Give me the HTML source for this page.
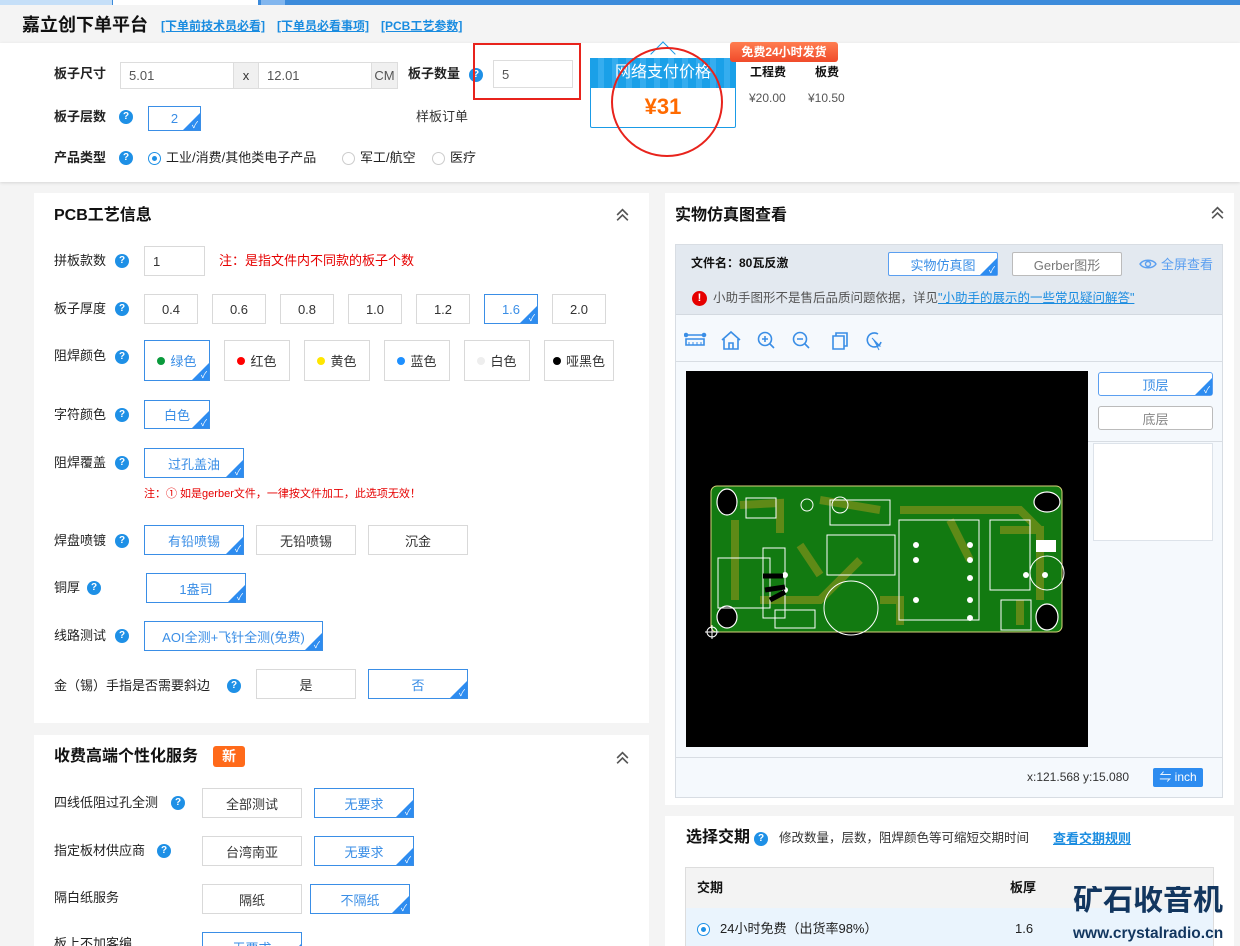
<!DOCTYPE html>
<html><head><meta charset="utf-8">
<style>
*{margin:0;padding:0;box-sizing:border-box}
html{width:1240px;height:946px;overflow:hidden}
body{width:1240px;height:946px;overflow:hidden;background:#f4f4f4;font-family:"Liberation Sans","Noto Sans CJK SC",sans-serif;font-size:13px;color:#333;position:relative}
.a{position:absolute}
.t{position:absolute;white-space:nowrap;line-height:1}
.b{position:absolute;border:1px solid #d9d9d9;background:#fff;display:flex;align-items:center;justify-content:center;font-size:13px;color:#333}
.sel{border-color:#3a8ee6;color:#3a8ee6}
.sel::after{content:"";position:absolute;right:0;bottom:0;border-style:solid;border-width:0 0 17px 17px;border-color:transparent transparent #2d8cf0 transparent}
.sel::before{content:"✓";position:absolute;right:2px;bottom:0;color:#fff;font-size:9px;z-index:2;line-height:10px}
.q{position:absolute;width:14px;height:14px;border-radius:50%;background:#1e90e6;color:#fff;font-size:10px;font-weight:bold;text-align:center;line-height:14px}
.lbl{position:absolute;white-space:nowrap;font-size:13px;color:#222;line-height:1}
.panel{position:absolute;background:#fff;overflow:hidden}
.h{position:absolute;font-size:16px;font-weight:bold;color:#111;white-space:nowrap;line-height:1}
.chev{position:absolute;width:14px;height:14px}
.dot{display:inline-block;width:8px;height:8px;border-radius:50%;margin-right:5px}
</style></head><body>
<div class="a" style="left:0;top:0;width:112px;height:5px;background:#c5dff8"></div>
<div class="a" style="left:112px;top:0;width:1px;height:5px;background:#3c8bdb"></div>
<div class="a" style="left:113px;top:0;width:145px;height:5px;background:#fff"></div>
<div class="a" style="left:258px;top:0;width:3px;height:5px;background:#3c8bdb"></div>
<div class="a" style="left:261px;top:0;width:24px;height:5px;background:#82b6ee"></div>
<div class="a" style="left:285px;top:0;width:955px;height:5px;background:#3c8bdb"></div>

<div class="t" style="left:22px;top:16px;font-size:18px;font-weight:bold;color:#111">嘉立创下单平台</div>
<div class="t" style="left:161px;top:20px;font-size:12px;font-weight:bold;color:#1a8ce0;text-decoration:underline">[下单前技术员必看]</div>
<div class="t" style="left:277px;top:20px;font-size:12px;font-weight:bold;color:#1a8ce0;text-decoration:underline">[下单员必看事项]</div>
<div class="t" style="left:381px;top:20px;font-size:12px;font-weight:bold;color:#1a8ce0;text-decoration:underline">[PCB工艺参数]</div>

<div class="a" style="left:0;top:43px;width:1240px;height:139px;background:#fff;box-shadow:0 1px 3px rgba(0,0,0,.12)"></div>
<div class="lbl" style="left:54px;top:67px;font-weight:bold">板子尺寸</div>
<div class="b" style="left:120px;top:62px;width:114px;height:27px;justify-content:flex-start;padding-left:8px;color:#555;border-color:#ddd">5.01</div>
<div class="b" style="left:233px;top:62px;width:26px;height:27px;background:#f0f0f0;border-color:#ddd">x</div>
<div class="b" style="left:258px;top:62px;width:114px;height:27px;justify-content:flex-start;padding-left:8px;color:#555;border-color:#ddd">12.01</div>
<div class="b" style="left:371px;top:62px;width:27px;height:27px;background:#f0f0f0;border-color:#ddd;color:#555">CM</div>
<div class="lbl" style="left:408px;top:67px;font-weight:bold">板子数量</div>
<div class="q" style="left:469px;top:68px">?</div>
<div class="b" style="left:493px;top:60px;width:80px;height:28px;justify-content:flex-start;padding-left:8px;color:#555;border-color:#ddd">5</div>
<div class="a" style="left:473px;top:43px;width:108px;height:57px;border:2px solid #e8231c"></div>

<div class="lbl" style="left:54px;top:110px;font-weight:bold">板子层数</div>
<div class="q" style="left:119px;top:110px">?</div>
<div class="b sel" style="left:148px;top:106px;width:53px;height:25px">2</div>
<div class="lbl" style="left:416px;top:110px;color:#333">样板订单</div>

<div class="lbl" style="left:54px;top:151px;font-weight:bold">产品类型</div>
<div class="q" style="left:119px;top:151px">?</div>
<div class="a" style="left:148px;top:152px;width:13px;height:13px;border:1px solid #1e90e6;border-radius:50%"><div class="a" style="left:3px;top:3px;width:5px;height:5px;border-radius:50%;background:#1e90e6"></div></div>
<div class="lbl" style="left:166px;top:151px">工业/消费/其他类电子产品</div>
<div class="a" style="left:342px;top:152px;width:13px;height:13px;border:1px solid #ccc;border-radius:50%"></div>
<div class="lbl" style="left:360px;top:151px">军工/航空</div>
<div class="a" style="left:432px;top:152px;width:13px;height:13px;border:1px solid #ccc;border-radius:50%"></div>
<div class="lbl" style="left:450px;top:151px">医疗</div>

<div class="a" style="left:590px;top:58px;width:146px;height:70px;border:1px solid #1a9be6;border-radius:2px;background:#fff"></div>
<div class="a" style="left:590px;top:58px;width:146px;height:30px;background:repeating-linear-gradient(90deg,#1aa0e8 0 8px,#35adef 8px 14px)"></div>
<div class="a" style="left:654px;top:45px;width:18px;height:18px;border-left:1px solid #1a9be6;border-top:1px solid #1a9be6;transform:rotate(45deg)"></div>
<div class="t" style="left:590px;top:65px;width:146px;text-align:center;color:#fff;font-size:16px">网络支付价格</div>
<div class="t" style="left:590px;top:96px;width:146px;text-align:center;color:#ff6a00;font-size:22px;font-weight:bold">¥31</div>
<div class="a" style="left:730px;top:42px;width:108px;height:20px;background:linear-gradient(#ff7d50,#f04a2a);border-radius:3px;color:#fff;font-size:12px;font-weight:bold;text-align:center;line-height:20px">免费24小时发货</div>
<div class="a" style="left:611px;top:47px;width:112px;height:110px;border:2px solid #e8231c;border-radius:50%"></div>
<div class="lbl" style="left:750px;top:66px;font-size:12px;font-weight:bold;color:#111">工程费</div>
<div class="lbl" style="left:815px;top:66px;font-size:12px;font-weight:bold;color:#111">板费</div>
<div class="lbl" style="left:749px;top:92px;font-size:12px;color:#555">¥20.00</div>
<div class="lbl" style="left:808px;top:92px;font-size:12px;color:#555">¥10.50</div>

<div class="panel" style="left:34px;top:193px;width:615px;height:530px"></div>
<div class="h" style="left:54px;top:208px">PCB工艺信息</div>
<svg class="chev" style="left:615px;top:207px;width:15px;height:16px" viewBox="0 0 14 14"><path d="M2 7l5-5 5 5M2 12l5-5 5 5" fill="none" stroke="#555" stroke-width="1.5"/></svg>

<div class="lbl" style="left:54px;top:254px">拼板款数</div><div class="q" style="left:115px;top:254px">?</div>
<div class="b" style="left:144px;top:246px;width:61px;height:30px;justify-content:flex-start;padding-left:8px">1</div>
<div class="lbl" style="left:219px;top:254px;color:#e60000">注：是指文件内不同款的板子个数</div>

<div class="lbl" style="left:54px;top:302px">板子厚度</div><div class="q" style="left:115px;top:302px">?</div>
<div class="b" style="left:144px;top:294px;width:54px;height:30px">0.4</div>
<div class="b" style="left:212px;top:294px;width:54px;height:30px">0.6</div>
<div class="b" style="left:280px;top:294px;width:54px;height:30px">0.8</div>
<div class="b" style="left:348px;top:294px;width:54px;height:30px">1.0</div>
<div class="b" style="left:416px;top:294px;width:54px;height:30px">1.2</div>
<div class="b sel" style="left:484px;top:294px;width:54px;height:30px">1.6</div>
<div class="b" style="left:552px;top:294px;width:54px;height:30px">2.0</div>

<div class="lbl" style="left:54px;top:349px">阻焊颜色</div><div class="q" style="left:115px;top:350px">?</div>
<div class="b sel" style="left:144px;top:340px;width:66px;height:41px"><span class="dot" style="background:#0a9a3c"></span>绿色</div>
<div class="b" style="left:224px;top:340px;width:66px;height:41px"><span class="dot" style="background:#f00"></span>红色</div>
<div class="b" style="left:304px;top:340px;width:66px;height:41px"><span class="dot" style="background:#ffe600"></span>黄色</div>
<div class="b" style="left:384px;top:340px;width:66px;height:41px"><span class="dot" style="background:#1e90ff"></span>蓝色</div>
<div class="b" style="left:464px;top:340px;width:66px;height:41px"><span class="dot" style="background:#eee"></span>白色</div>
<div class="b" style="left:544px;top:340px;width:70px;height:41px"><span class="dot" style="background:#000"></span>哑黑色</div>

<div class="lbl" style="left:54px;top:408px">字符颜色</div><div class="q" style="left:115px;top:408px">?</div>
<div class="b sel" style="left:144px;top:400px;width:66px;height:29px">白色</div>

<div class="lbl" style="left:54px;top:456px">阻焊覆盖</div><div class="q" style="left:115px;top:456px">?</div>
<div class="b sel" style="left:144px;top:448px;width:100px;height:30px">过孔盖油</div>
<div class="lbl" style="left:144px;top:489px;font-size:11px;color:#e60000">注：① 如是gerber文件，一律按文件加工，此选项无效！</div>

<div class="lbl" style="left:54px;top:534px">焊盘喷镀</div><div class="q" style="left:115px;top:534px">?</div>
<div class="b sel" style="left:144px;top:525px;width:100px;height:30px">有铅喷锡</div>
<div class="b" style="left:256px;top:525px;width:100px;height:30px">无铅喷锡</div>
<div class="b" style="left:368px;top:525px;width:100px;height:30px">沉金</div>

<div class="lbl" style="left:54px;top:581px">铜厚</div><div class="q" style="left:87px;top:581px">?</div>
<div class="b sel" style="left:146px;top:573px;width:100px;height:30px">1盎司</div>

<div class="lbl" style="left:54px;top:629px">线路测试</div><div class="q" style="left:115px;top:629px">?</div>
<div class="b sel" style="left:144px;top:621px;width:179px;height:30px">AOI全测+飞针全测(免费)</div>

<div class="lbl" style="left:54px;top:679px">金（锡）手指是否需要斜边</div><div class="q" style="left:227px;top:679px">?</div>
<div class="b" style="left:256px;top:669px;width:100px;height:30px">是</div>
<div class="b sel" style="left:368px;top:669px;width:100px;height:30px">否</div>

<div class="panel" style="left:34px;top:735px;width:615px;height:211px">
<div class="h" style="left:20px;top:14px">收费高端个性化服务</div>
<div class="a" style="left:179px;top:11px;width:32px;height:21px;background:#ff6a1a;border-radius:3px;color:#fff;font-weight:bold;font-size:14px;text-align:center;line-height:21px">新</div>
<svg class="chev" style="left:581px;top:15px;width:15px;height:16px" viewBox="0 0 14 14"><path d="M2 7l5-5 5 5M2 12l5-5 5 5" fill="none" stroke="#555" stroke-width="1.5"/></svg>
<div class="lbl" style="left:20px;top:61px">四线低阻过孔全测</div><div class="q" style="left:137px;top:61px">?</div>
<div class="b" style="left:168px;top:53px;width:100px;height:30px">全部测试</div>
<div class="b sel" style="left:280px;top:53px;width:100px;height:30px">无要求</div>
<div class="lbl" style="left:20px;top:109px">指定板材供应商</div><div class="q" style="left:123px;top:109px">?</div>
<div class="b" style="left:168px;top:101px;width:100px;height:30px">台湾南亚</div>
<div class="b sel" style="left:280px;top:101px;width:100px;height:30px">无要求</div>
<div class="lbl" style="left:20px;top:156px">隔白纸服务</div>
<div class="b" style="left:168px;top:149px;width:100px;height:30px">隔纸</div>
<div class="b sel" style="left:276px;top:149px;width:100px;height:30px">不隔纸</div>
<div class="lbl" style="left:20px;top:202px">板上不加客编</div>
<div class="b sel" style="left:168px;top:197px;width:100px;height:30px">无要求</div>
</div>

<div class="panel" style="left:665px;top:193px;width:569px;height:612px"></div>
<div class="h" style="left:675px;top:208px">实物仿真图查看</div>
<svg class="chev" style="left:1210px;top:205px;width:15px;height:16px" viewBox="0 0 14 14"><path d="M2 7l5-5 5 5M2 12l5-5 5 5" fill="none" stroke="#555" stroke-width="1.5"/></svg>
<div class="a" style="left:675px;top:244px;width:548px;height:554px;border:1px solid #d8dde3;background:#f5f9fd"></div>
<div class="a" style="left:676px;top:245px;width:546px;height:70px;background:#e3e9f0;border-bottom:1px solid #d3d9e0"></div>
<div class="lbl" style="left:691px;top:257px;font-size:12px;font-weight:bold;color:#111">文件名：80瓦反激</div>
<div class="b sel" style="left:888px;top:252px;width:110px;height:24px;border-color:#5b9ff0;border-radius:2px">实物仿真图</div>
<div class="b" style="left:1012px;top:252px;width:110px;height:24px;border-color:#bbb;color:#777;border-radius:2px">Gerber图形</div>
<svg class="a" style="left:1139px;top:257px" width="18" height="14" viewBox="0 0 18 14"><path d="M1 7C4 2 14 2 17 7C14 12 4 12 1 7Z" fill="none" stroke="#5b9ff0" stroke-width="1.4"/><circle cx="9" cy="7" r="2.5" fill="none" stroke="#5b9ff0" stroke-width="1.4"/></svg>
<div class="lbl" style="left:1161px;top:258px;color:#5b9ff0">全屏查看</div>
<div class="a" style="left:692px;top:291px;width:15px;height:15px;border-radius:50%;background:#e60000;color:#fff;font-size:11px;font-weight:bold;text-align:center;line-height:15px">!</div>
<div class="lbl" style="left:713px;top:292px;font-size:12.5px;color:#555">小助手图形不是售后品质问题依据，详见<span style="color:#1a8ce0;text-decoration:underline">"小助手的展示的一些常见疑问解答"</span></div>
<svg class="a" style="left:684px;top:330px" width="220" height="22" viewBox="0 0 220 22" fill="none" stroke="#3a8ee6" stroke-width="1.6">
<path d="M1 5h20M2 9h18v6H2z"/><circle cx="2" cy="5" r="1.5" fill="#3a8ee6"/><circle cx="20" cy="5" r="1.5" fill="#3a8ee6"/><path d="M5 12v3M9 12v3M13 12v3M17 12v3" stroke-width="1"/>
<path d="M38 10l9-8 9 8M40 9v10h14V9M45 19v-6h4v6"/>
<circle cx="81" cy="9" r="6.5"/><path d="M86 14l4 4M78 9h6M81 6v6"/>
<circle cx="116" cy="9" r="6.5"/><path d="M121 14l4 4M113 9h6"/>
<path d="M149 6h11v13h-11zM152 6V3h11v13h-3"/>
<path d="M197 12a7 7 0 1 1-3-8"/><path d="M188 8l8 8-3 0 2 4" fill="#3a8ee6" stroke-width="1"/>
</svg>
<div class="a" style="left:676px;top:361px;width:546px;height:1px;background:#d8dde3"></div>
<div class="a" style="left:686px;top:371px;width:402px;height:376px;background:#000"></div>
<svg class="a" style="left:686px;top:371px" width="402" height="376" viewBox="686 371 402 376">
<rect x="711" y="486" width="351" height="146" rx="6" fill="#127a11" stroke="#d8d27a" stroke-width="1"/>
<path d="M740 505l40 -2v30M820 500l60 10M900 510h120l20 20v60M950 520l20 40M860 560l-40 40h-60M1000 530h40v70M735 520v80M800 545l20 30M1020 600v25M880 600h20v25" stroke="#5f8a17" stroke-width="8" fill="none"/>
<g fill="#000" stroke="#fff" stroke-width="1.2"><ellipse cx="727" cy="502" rx="10" ry="13"/><ellipse cx="727" cy="617" rx="10" ry="11"/><ellipse cx="1047" cy="502" rx="13" ry="10"/><ellipse cx="1047" cy="617" rx="11" ry="13"/></g>
<g fill="none" stroke="#fff" stroke-width="1"><circle cx="851" cy="608" r="27"/><rect x="899" y="520" width="80" height="100"/><rect x="827" y="535" width="68" height="40"/><rect x="990" y="520" width="40" height="70"/><rect x="718" y="558" width="52" height="50"/><rect x="763" y="548" width="22" height="70"/><rect x="1001" y="600" width="30" height="30"/><circle cx="1047" cy="573" r="17"/><rect x="746" y="498" width="30" height="20"/><rect x="775" y="610" width="40" height="18"/><rect x="830" y="500" width="60" height="25"/><circle cx="807" cy="505" r="6"/><circle cx="840" cy="505" r="8"/></g>
<g fill="#fff"><circle cx="916" cy="545" r="3"/><circle cx="916" cy="560" r="3"/><circle cx="916" cy="600" r="3"/><circle cx="970" cy="545" r="3"/><circle cx="970" cy="560" r="3"/><circle cx="970" cy="578" r="3"/><circle cx="970" cy="600" r="3"/><circle cx="970" cy="618" r="3"/><circle cx="785" cy="575" r="3"/><circle cx="785" cy="590" r="3"/><circle cx="1045" cy="575" r="3"/><circle cx="1026" cy="575" r="3"/><rect x="1036" y="540" width="20" height="12"/></g>
<path d="M763 576h20M765 590l20 -3M770 600l15 -8" stroke="#000" stroke-width="5"/>
<circle cx="712" cy="632" r="5" fill="none" stroke="#fff"/><path d="M705 632h14M712 625v14" stroke="#fff"/>
</svg>
<div class="b sel" style="left:1098px;top:372px;width:115px;height:24px;border-color:#5b9ff0;border-radius:3px">顶层</div>
<div class="b" style="left:1098px;top:406px;width:115px;height:24px;border-color:#bbb;color:#888;border-radius:3px">底层</div>
<div class="a" style="left:1088px;top:441px;width:134px;height:1px;background:#d8dde3"></div>
<div class="a" style="left:1093px;top:443px;width:120px;height:98px;background:#fff;border:1px solid #dde3ea"></div>
<div class="a" style="left:676px;top:757px;width:546px;height:1px;background:#d8dde3"></div>
<div class="lbl" style="left:1027px;top:771px;font-size:12px;color:#333">x:121.568 y:15.080</div>
<div class="a" style="left:1153px;top:768px;width:50px;height:19px;background:#2d8cf0;border-radius:2px;color:#fff;font-size:12px;text-align:center;line-height:19px">⇋ inch</div>

<div class="panel" style="left:665px;top:816px;width:569px;height:130px"></div>
<div class="h" style="left:686px;top:830px">选择交期</div><div class="q" style="left:754px;top:832px">?</div>
<div class="lbl" style="left:779px;top:832px;font-size:12.5px;color:#333">修改数量，层数，阻焊颜色等可缩短交期时间</div>
<div class="lbl" style="left:1053px;top:832px;font-weight:bold;color:#1a8ce0;text-decoration:underline">查看交期规则</div>
<div class="a" style="left:685px;top:867px;width:529px;height:79px;border:1px solid #ddd;background:#f3f3f3"></div>
<div class="a" style="left:686px;top:908px;width:527px;height:38px;background:#eaf4fd"></div>
<div class="lbl" style="left:697px;top:881px;font-weight:bold;color:#111">交期</div>
<div class="lbl" style="left:1010px;top:881px;font-weight:bold;color:#111">板厚</div>
<div class="a" style="left:697px;top:923px;width:13px;height:13px;border:1px solid #1e90e6;border-radius:50%;background:#fff"><div class="a" style="left:3px;top:3px;width:5px;height:5px;border-radius:50%;background:#1e90e6"></div></div>
<div class="lbl" style="left:720px;top:922px">24小时免费（出货率98%）</div>
<div class="lbl" style="left:1015px;top:922px">1.6</div>
<div class="t" style="left:1073px;top:886px;font-size:30px;font-weight:bold;color:#12365f;width:160px;overflow:hidden">矿石收音机</div>
<div class="t" style="left:1073px;top:926px;font-size:15.5px;font-weight:bold;color:#12365f;width:160px;overflow:hidden">www.crystalradio.cn</div>
</body></html>
